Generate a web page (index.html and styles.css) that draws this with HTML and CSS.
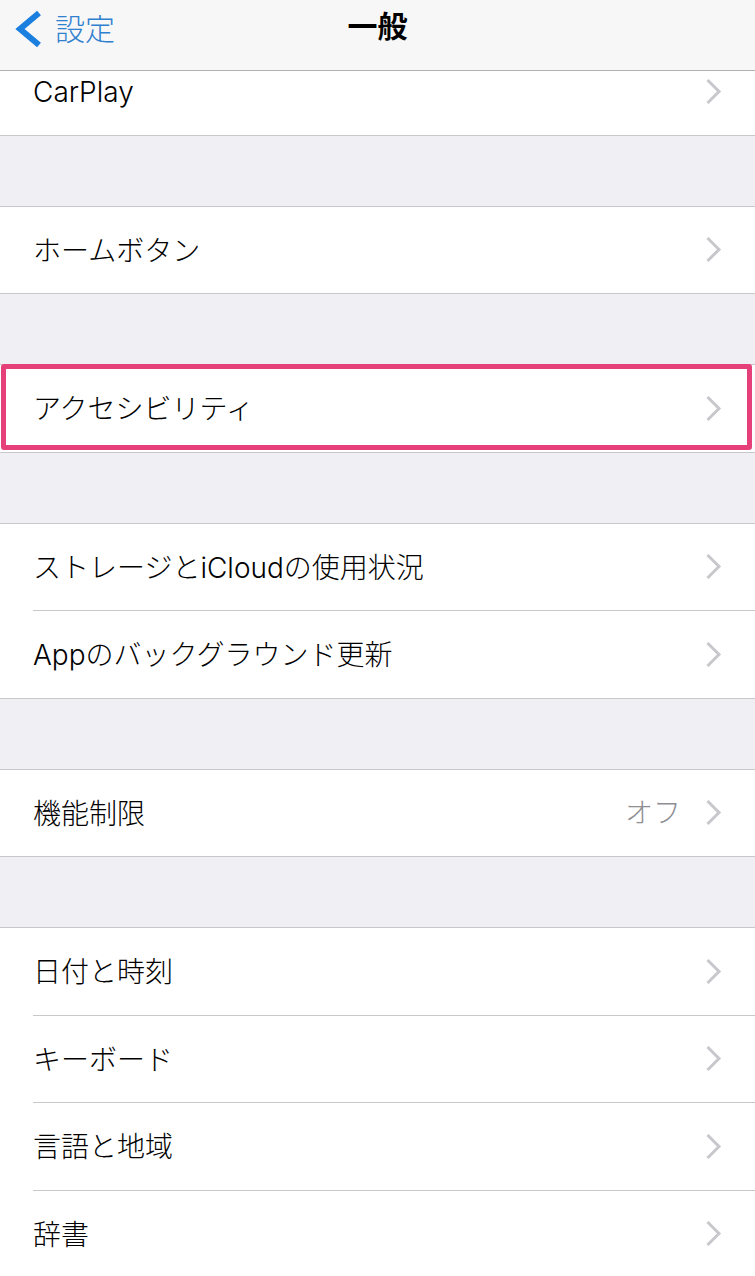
FILE: index.html
```html
<!DOCTYPE html>
<html lang="ja">
<head>
<meta charset="utf-8">
<title>一般</title>
<link rel="stylesheet" href="styles.css">
</head>
<body>
<header class="nav">
  <a class="back">
    <svg class="back-icon" viewBox="0 0 32 38" width="32" height="38"><path d="M27 3 L8 19 L27 35" fill="none" stroke="#1b7fe0" stroke-width="6" stroke-linecap="butt" stroke-linejoin="miter"/></svg>
    <span class="back-label">設定</span>
  </a>
  <h1 class="title">一般</h1>
</header>

<main class="list">
  <section class="group first">
    <div class="row"><span class="label">CarPlay</span><span class="chev"><svg viewBox="0 0 17 27" width="17" height="27"><path d="M2.5 2 L14 13.5 L2.5 25" fill="none" stroke="#c7c7cc" stroke-width="3"/></svg></span></div>
  </section>

  <section class="group">
    <div class="row"><span class="label">ホームボタン</span><span class="chev"><svg viewBox="0 0 17 27" width="17" height="27"><path d="M2.5 2 L14 13.5 L2.5 25" fill="none" stroke="#c7c7cc" stroke-width="3"/></svg></span></div>
  </section>

  <section class="group">
    <div class="row highlighted"><span class="label">アクセシビリティ</span><span class="chev"><svg viewBox="0 0 17 27" width="17" height="27"><path d="M2.5 2 L14 13.5 L2.5 25" fill="none" stroke="#c7c7cc" stroke-width="3"/></svg></span><span class="mark"></span></div>
  </section>

  <section class="group">
    <div class="row"><span class="label">ストレージとiCloudの使用状況</span><span class="chev"><svg viewBox="0 0 17 27" width="17" height="27"><path d="M2.5 2 L14 13.5 L2.5 25" fill="none" stroke="#c7c7cc" stroke-width="3"/></svg></span></div>
    <div class="row"><span class="label">Appのバックグラウンド更新</span><span class="chev"><svg viewBox="0 0 17 27" width="17" height="27"><path d="M2.5 2 L14 13.5 L2.5 25" fill="none" stroke="#c7c7cc" stroke-width="3"/></svg></span></div>
  </section>

  <section class="group">
    <div class="row"><span class="label">機能制限</span><span class="value">オフ</span><span class="chev"><svg viewBox="0 0 17 27" width="17" height="27"><path d="M2.5 2 L14 13.5 L2.5 25" fill="none" stroke="#c7c7cc" stroke-width="3"/></svg></span></div>
  </section>

  <section class="group">
    <div class="row"><span class="label">日付と時刻</span><span class="chev"><svg viewBox="0 0 17 27" width="17" height="27"><path d="M2.5 2 L14 13.5 L2.5 25" fill="none" stroke="#c7c7cc" stroke-width="3"/></svg></span></div>
    <div class="row"><span class="label">キーボード</span><span class="chev"><svg viewBox="0 0 17 27" width="17" height="27"><path d="M2.5 2 L14 13.5 L2.5 25" fill="none" stroke="#c7c7cc" stroke-width="3"/></svg></span></div>
    <div class="row"><span class="label">言語と地域</span><span class="chev"><svg viewBox="0 0 17 27" width="17" height="27"><path d="M2.5 2 L14 13.5 L2.5 25" fill="none" stroke="#c7c7cc" stroke-width="3"/></svg></span></div>
    <div class="row"><span class="label">辞書</span><span class="chev"><svg viewBox="0 0 17 27" width="17" height="27"><path d="M2.5 2 L14 13.5 L2.5 25" fill="none" stroke="#c7c7cc" stroke-width="3"/></svg></span></div>
  </section>
</main>
</body>
</html>
```

FILE: styles.css
```css
html, body {
  margin: 0;
  padding: 0;
}

body {
  width: 755px;
  height: 1276px;
  overflow: hidden;
  background: #efeff4;
  font-family: Inter, "Noto Sans CJK JP", sans-serif;
  color: #000;
  position: relative;
}

.nav {
  position: absolute;
  top: 0;
  left: 0;
  right: 0;
  height: 70px;
  background: #f7f7f7;
  border-bottom: 1px solid #b2b2b2;
  z-index: 10;
  display: flex;
  align-items: flex-start;
  justify-content: center;
}

.back {
  position: absolute;
  left: 12px;
  top: 10px;
  display: flex;
  align-items: center;
  gap: 11px;
}

.back-icon {
  display: block;
}

.back-label {
  font-family: "Noto Sans CJK JP", sans-serif;
  font-size: 30px;
  font-weight: 300;
  line-height: 32px;
  color: #2f80cf;
  position: relative;
  top: -2px;
}

.title {
  margin: 0;
  padding-top: 6px;
  font-family: "Noto Sans CJK JP", sans-serif;
  font-size: 30px;
  line-height: 36px;
  font-weight: 700;
}

.list {
  padding-top: 47px;
}

.group {
  background: #fff;
  border-top: 1px solid #c8c7cc;
  border-bottom: 1px solid #c8c7cc;
  margin-bottom: 70px;
  padding-left: 33px;
}

.row {
  position: relative;
  height: 86.5px;
  display: flex;
  align-items: center;
  padding-right: 33px;
  border-top: 1px solid #c8c7cc;
}

.row:first-child {
  border-top: none;
}

.label {
  flex: 1;
  font-size: 28px;
  font-weight: 300;
  line-height: 36px;
  position: relative;
  top: 1px;
}

.value {
  font-size: 28px;
  font-weight: 300;
  line-height: 36px;
  color: #8e8e93;
  margin-right: 24px;
}

.chev {
  display: flex;
  align-items: center;
}

.chev svg {
  display: block;
}

.mark {
  position: absolute;
  top: -1px;
  left: -32px;
  right: 3px;
  height: 86px;
  box-sizing: border-box;
  border: 5px solid #e6407a;
  border-radius: 3px;
  pointer-events: none;
}
```
